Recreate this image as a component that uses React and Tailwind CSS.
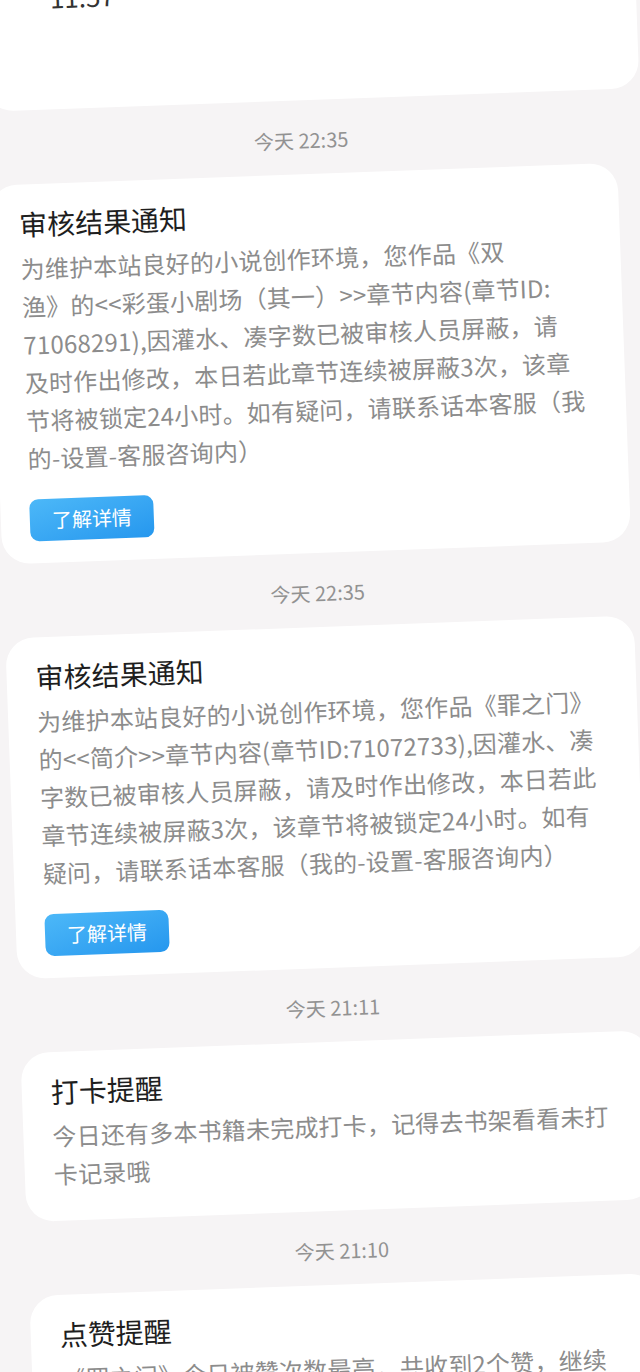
import React from "react";

const notices = [
  {
    time: "今天 22:35",
    title: "审核结果通知",
    lines: [
      "为维护本站良好的小说创作环境，您作品《双",
      "渔》的<<彩蛋小剧场（其一）>>章节内容(章节ID:",
      "71068291),因灌水、凑字数已被审核人员屏蔽，请",
      "及时作出修改，本日若此章节连续被屏蔽3次，该章",
      "节将被锁定24小时。如有疑问，请联系话本客服（我",
      "的-设置-客服咨询内）",
    ],
    action: true,
  },
  {
    time: "今天 22:35",
    title: "审核结果通知",
    lines: [
      "为维护本站良好的小说创作环境，您作品《罪之门》",
      "的<<简介>>章节内容(章节ID:71072733),因灌水、凑",
      "字数已被审核人员屏蔽，请及时作出修改，本日若此",
      "章节连续被屏蔽3次，该章节将被锁定24小时。如有",
      "疑问，请联系话本客服（我的-设置-客服咨询内）",
    ],
    action: true,
  },
  {
    time: "今天 21:11",
    title: "打卡提醒",
    lines: ["今日还有多本书籍未完成打卡，记得去书架看看未打", "卡记录哦"],
    action: false,
  },
  {
    time: "今天 21:10",
    title: "点赞提醒",
    lines: ["《罪之门》今日被赞次数最高，共收到2个赞，继续", "加油哦"],
    action: false,
  },
];

function TimeLabel({ text }) {
  return (
    <div className="flex h-[74px] justify-center pt-[28px] text-[20px] leading-[24px] text-[#929292]">
      {text}
    </div>
  );
}

function NoticeCard({ title, lines, action }) {
  return (
    <div
      className={`ml-[6px] mr-[5px] rounded-[28px] bg-white px-[29px] pt-[21px] ${
        action ? "pb-[22px]" : "pb-[28px]"
      }`}
    >
      <div className="text-[28px] leading-[36px] text-[#1e1e1e]">{title}</div>
      <div className="mt-[8px] text-[24px] leading-[38px] tracking-[0.2px] text-[#8c8c8c]">
        {lines.map((line, i) => (
          <div key={i} className="whitespace-nowrap">
            {line}
          </div>
        ))}
      </div>
      {action && (
        <button className="mt-[22px] flex h-[42px] w-[124px] items-center justify-center rounded-[9px] bg-gradient-to-br from-[#4cb8f8] to-[#2597ee] text-[20px] text-white">
          了解详情
        </button>
      )}
    </div>
  );
}

export default function App() {
  return (
    <div
      className="relative h-[1372px] w-[640px] overflow-hidden bg-[#f6f4f5]"
      style={{ fontFamily: '"Noto Sans CJK SC", "Noto Sans", sans-serif' }}
    >
      {/* the whole list is tilted a little, as in the photo */}
      <div className="h-[1372px] w-[640px] rotate-[-2.1deg]">
        {/* card cut off by the top of the screen */}
        <div className="-mt-[31px] ml-[6px] -mr-[20px] rounded-b-[28px] bg-white px-[29px] pb-[93px]">
          <div className="ml-[39px] text-[26px] leading-[38px] text-[#333333]">11:57</div>
        </div>
        {notices.map((n, i) => (
          <React.Fragment key={i}>
            <TimeLabel text={n.time} />
            <NoticeCard title={n.title} lines={n.lines} action={n.action} />
          </React.Fragment>
        ))}
      </div>
    </div>
  );
}
